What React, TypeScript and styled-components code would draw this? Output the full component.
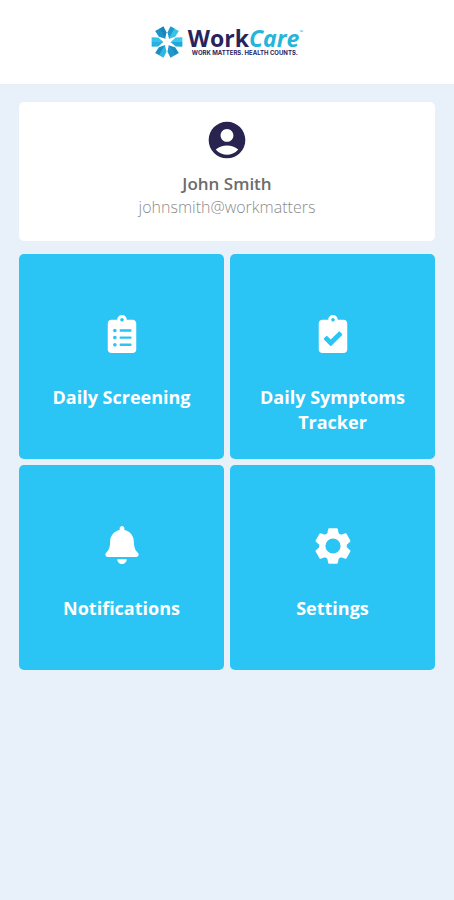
import React from "react";
import styled, { createGlobalStyle } from "styled-components";
import { FaBell, FaClipboardCheck, FaClipboardList } from "react-icons/fa";
import { MdAccountCircle } from "react-icons/md";

const GlobalStyle = createGlobalStyle`
  * { box-sizing: border-box; }
  body {
    margin: 0;
    background: #e8f0fa;
    font-family: "Open Sans", "Noto Sans", sans-serif;
  }
`;

const Header = styled.header`
  display: flex;
  justify-content: center;
  height: 84px;
  padding-top: 26px;
  background: #ffffff;
`;

const Brand = styled.a`
  display: flex;
  align-items: flex-start;
  gap: 5px;
  height: 32px;
  color: #29235c;
  text-decoration: none;
`;

const BrandText = styled.span`
  display: flex;
  flex-direction: column;
`;

const Wordmark = styled.span`
  display: flex;
  font-size: 23px;
  font-weight: 700;
  line-height: 24px;
`;

const Care = styled.em`
  color: #27b4dc;
`;

const Trademark = styled.span`
  color: #27b4dc;
  font-size: 5px;
  line-height: 12px;
`;

const Tagline = styled.span`
  padding-left: 4px;
  font-family: Inter, "Open Sans", sans-serif;
  font-size: 6px;
  font-weight: 700;
  line-height: 6px;
  white-space: nowrap;
`;

const Main = styled.main`
  display: flex;
  flex-direction: column;
  gap: 13px;
  padding: 18px 19px;
`;

const Profile = styled.section`
  display: flex;
  flex-direction: column;
  align-items: center;
  padding: 16px 16px 23px;
  border-radius: 5px;
  background: #ffffff;
  color: #28244f;
`;

const Name = styled.h1`
  margin: 10px 0 0;
  color: #6c6c6c;
  font-size: 17px;
  font-weight: 600;
  line-height: 24px;
`;

const Email = styled.p`
  margin: 0;
  color: #8c8c8c;
  font-size: 16px;
  font-weight: 300;
  line-height: 22px;
`;

const Grid = styled.nav`
  display: grid;
  grid-template-columns: 1fr 1fr;
  gap: 6px;
`;

const Tile = styled.button`
  display: flex;
  flex-direction: column;
  align-items: center;
  gap: 30px;
  aspect-ratio: 1;
  padding: 59px 16px 16px;
  border: 0;
  border-radius: 5px;
  background: #2ac4f5;
  color: #ffffff;
  font-family: inherit;
  font-size: 18px;
  font-weight: 700;
  line-height: 25px;
  cursor: pointer;
`;

const IconBox = styled.span`
  display: flex;
  align-items: center;
  justify-content: center;
  height: 42px;
`;

const petals = [
  { angle: 0, light: "#3cc8ec", dark: "#22a9d8" },
  { angle: 60, light: "#1b8fc4", dark: "#1f98cc" },
  { angle: 120, light: "#2bb9e3", dark: "#1b8fc4" },
  { angle: 180, light: "#2bb0de", dark: "#35c3ea" },
  { angle: 240, light: "#1c93c8", dark: "#1785bb" },
  { angle: 300, light: "#1d9bd1", dark: "#35c3ea" },
];

function LogoMark() {
  return (
    <svg width="32" height="32" viewBox="-16 -16 32 32" aria-hidden="true">
      {petals.map(({ angle, light, dark }) => (
        <g key={angle} transform={`rotate(${angle})`}>
          <path d="M3.6 0.3 L8.6 -4.4 L15.4 -4.8 V0.3 Z" fill={light} />
          <path d="M3.6 0 L8.6 4.4 L15.4 4.8 V0 Z" fill={dark} />
        </g>
      ))}
    </svg>
  );
}

function GearIcon() {
  return (
    <svg width="38" height="38" viewBox="-19 -20 38 38">
      <circle r="10.7" fill="none" stroke="currentColor" strokeWidth="6.2" />
      {[0, 60, 120, 180, 240, 300].map((angle) => (
        <path
          key={angle}
          d="M-6 -11 L-4.8 -17 Q-4.6 -17.8 -3.8 -17.8 H3.8 Q4.6 -17.8 4.8 -17 L6 -11 L3 -9 H-3 Z"
          fill="currentColor"
          transform={`rotate(${angle})`}
        />
      ))}
    </svg>
  );
}

const tiles = [
  { label: "Daily Screening", icon: <FaClipboardList size={38} /> },
  { label: "Daily Symptoms Tracker", icon: <FaClipboardCheck size={38} /> },
  { label: "Notifications", icon: <FaBell size={38} /> },
  { label: "Settings", icon: <GearIcon /> },
];

export default function App() {
  return (
    <>
      <GlobalStyle />
      <Header>
        <Brand href="#">
          <LogoMark />
          <BrandText>
            <Wordmark>
              Work<Care>Care</Care>
              <Trademark>™</Trademark>
            </Wordmark>
            <Tagline>WORK MATTERS. HEALTH COUNTS.</Tagline>
          </BrandText>
        </Brand>
      </Header>
      <Main>
        <Profile>
          <MdAccountCircle size={44} aria-hidden="true" />
          <Name>John Smith</Name>
          <Email>johnsmith@workmatters</Email>
        </Profile>
        <Grid aria-label="Main menu">
          {tiles.map(({ label, icon }) => (
            <Tile key={label} type="button">
              <IconBox aria-hidden="true">{icon}</IconBox>
              {label}
            </Tile>
          ))}
        </Grid>
      </Main>
    </>
  );
}
